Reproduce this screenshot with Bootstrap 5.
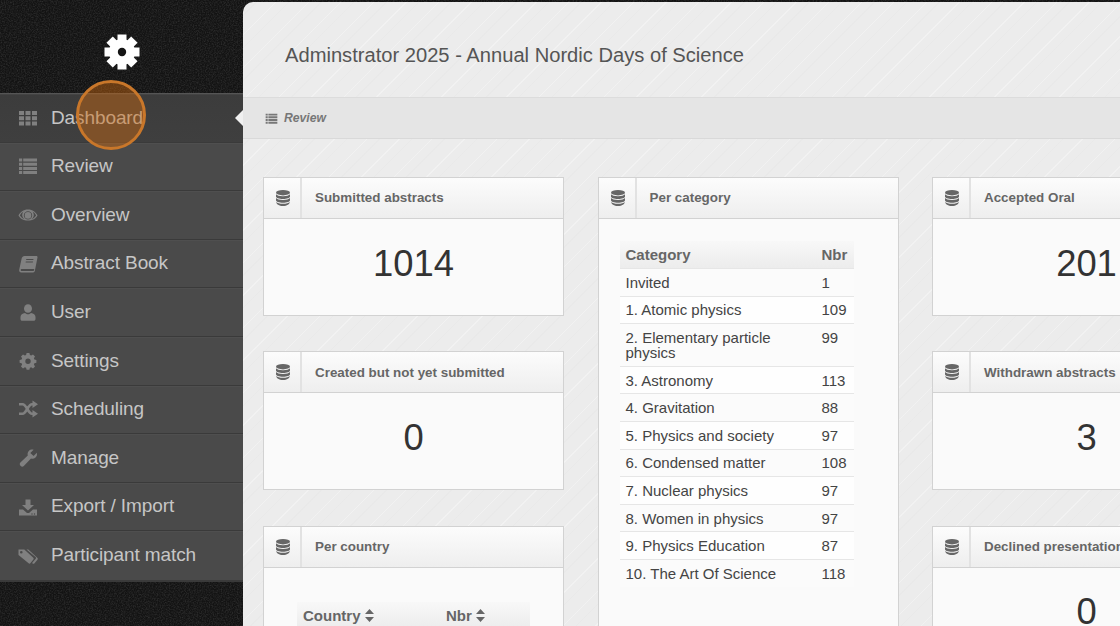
<!DOCTYPE html>
<html lang="en">
<head>
<meta charset="utf-8">
<title>Review</title>
<link href="https://cdn.jsdelivr.net/npm/bootstrap@5.3.0/dist/css/bootstrap.min.css" rel="stylesheet">
<style>
html,body{height:626px;overflow:hidden}
body{background-color:#131313;font-family:"Liberation Sans",Arial,sans-serif;color:#333;
 background-image:url("data:image/svg+xml,%3Csvg xmlns='http://www.w3.org/2000/svg' width='240' height='240'%3E%3Cfilter id='n'%3E%3CfeTurbulence type='fractalNoise' baseFrequency='.75' numOctaves='2' stitchTiles='stitch'/%3E%3CfeColorMatrix values='0 0 0 0 1 0 0 0 0 1 0 0 0 0 1 0 0 0 .22 -.08'/%3E%3C/filter%3E%3Crect width='240' height='240' filter='url(%23n)'/%3E%3C/svg%3E")}
.side-col{width:243px;flex:none;position:relative}
.side-logo{height:93px;padding-bottom:0}
.logo-mark{width:36px;height:36px;margin-top:11px;fill:#fff}
.side-menu{border-top:1px solid #555;border-bottom:2px solid #3a3a3a}
.side-link{height:48.6px;background:#4a4a4a;border-bottom:1px solid #3a3a3a;box-shadow:inset 0 1px 0 #4f4f4f;color:#c6c6c6;font-size:19px;letter-spacing:-.1px;text-decoration:none}
.side-link:last-child{border-bottom:0}
.side-link.is-active{background:linear-gradient(#3c3c3c,#3f3f3f);box-shadow:inset 0 1px 0 #444}
.side-ico{width:20px;height:20px;margin-left:18px;margin-right:13px;flex:none;fill:#808080}
.side-arrow{position:absolute;right:0;top:110px;width:0;height:0;border:8px solid transparent;border-right-color:#f0f0f0;border-left:0}
.hot-spot{position:absolute;left:76px;top:80px;width:70px;height:70px;border-radius:50%;background:rgba(205,105,15,.45);border:3px solid #c9772a;z-index:5}
.main-col{flex:none;width:877px;height:624px;margin-top:2px;overflow:hidden;border-top-left-radius:10px;background-color:#ececec;
 background-image:repeating-linear-gradient(135deg,rgba(255,255,255,.3) 0 1px,transparent 1px 9px,rgba(0,0,0,.012) 9px 10px,transparent 10px 23px)}
.main-head{height:96px;border-bottom:1px solid #dcdcdc;padding:12px 0 0 42px}
.main-title{font-size:20.15px;font-weight:400;color:#555;margin:0}
.crumb-bar{height:41px;background:#e5e5e5;border-bottom:1px solid #d9d9d9;padding-left:22px;color:#777;font-size:12.2px;font-weight:700;font-style:italic}
.crumb-ico{width:13px;height:13px;fill:#777;margin-right:6px}
.board{padding:38px 0 0 20px;gap:33.5px}
.board-col{width:301px;flex:none;gap:35.4px}
.board-col-last{width:309px}
.stat-card{border:1px solid #d2d2d2;border-radius:0;background:#fafafa;flex:none}
.stat-head{height:41px;padding:0;border-bottom:1px solid #d2d2d2;border-radius:0!important;background:linear-gradient(#fcfcfc,#eeeeee);color:#666;font-size:13.4px;font-weight:700}
.stat-tab{width:38px;height:40px;border-right:2px solid #e2e2e2;padding-left:2px;flex:none}
.stat-ico{width:14px;height:16px;fill:#666}
.stat-name{padding:1px 0 0 13px;white-space:nowrap}
.stat-num{height:96px;font-size:36.4px;color:#333;padding:0 0 6px}
.tbl-wrap{padding:22px 21px 60px}
.data-tbl{width:234px;table-layout:fixed;font-size:15px;line-height:15px;margin:0}
.data-tbl th{background:linear-gradient(#f8f8f8,#ececec);color:#666;font-weight:700;padding:6px;border-bottom:1px solid #e6e6e6}
.data-tbl td{padding:5.8px 6px;border-bottom:1px solid #e6e6e6;background:#fefefe;color:#444}
.data-tbl tr:nth-child(odd) td{background:#fbfbfb}
.data-tbl tr:last-child td{border-bottom:0}
.data-tbl .num-col{width:38px}
.tbl-wrap-wide{padding:34px 33px 10px}
.tbl-wide{width:233px}
.tbl-wide .num-col{width:90px}
.sort-ico{width:9px;height:13px;fill:#666;vertical-align:-1px}
</style>
</head>
<body class="d-flex">
<svg width="0" height="0" class="position-absolute">
 <defs>
  <symbol id="i-db" viewBox="0 0 14 16"><ellipse cx="7" cy="2.700" rx="7" ry="2.700"/><path d="M0 4.200c1 1.300 3.500 2 7 2s6-.7 7-2v2.300c0 1.400-3 2.500-7 2.500s-7-1.100-7-2.500z"/><path d="M0 8c1 1.300 3.500 2 7 2s6-.7 7-2v2.300c0 1.400-3 2.500-7 2.500s-7-1.100-7-2.500z"/><path d="M.3 12c1 1.200 3.400 1.800 6.700 1.800s5.700-.6 6.700-1.800c.2 2-2.800 4-6.700 4s-6.900-2-6.700-4z"/></symbol>
  <symbol id="i-list" viewBox="0 0 20 20"><path d="M1 2.500h3.200v3H1zM5.200 2.500H19v3H5.200zM1 6.700h3.200v3H1zM5.200 6.700H19v3H5.200zM1 10.900h3.200v3H1zM5.200 10.900H19v3H5.200zM1 15.100h3.200v3H1zM5.200 15.100H19v3H5.200z"/></symbol>
  <symbol id="i-gear" viewBox="0 0 20 20"><path fill-rule="evenodd" d="M8.600 2h2.800l.5 2 1.300.5 1.800-1.100 2 2-1.100 1.800.5 1.300 2 .5v2.800l-2 .5-.5 1.300 1.100 1.800-2 2-1.800-1.100-1.300.5-.5 2H8.600l-.5-2-1.300-.5L5 17.400l-2-2 1.100-1.800-.5-1.300-2-.5V9l2-.5.5-1.300L3 5.400l2-2 1.800 1.100 1.300-.5zM10 7.500a2.700 2.700 0 1 0 0 5.400 2.700 2.700 0 0 0 0-5.400z"/></symbol>
 </defs>
</svg>

<aside class="side-col">
 <div class="side-logo d-flex align-items-center justify-content-center">
  <svg class="logo-mark" viewBox="-18 -18 36 36"><circle r="13"/><rect x="-4.500" y="-17.500" width="9" height="35"/><rect x="-4.500" y="-17.500" width="9" height="35" transform="rotate(45)"/><rect x="-4.500" y="-17.500" width="9" height="35" transform="rotate(90)"/><rect x="-4.500" y="-17.500" width="9" height="35" transform="rotate(135)"/><circle r="4.200" fill="#151515"/></svg>
 </div>
 <nav class="side-menu d-flex flex-column">
  <a class="side-link is-active d-flex align-items-center" href="#"><svg class="side-ico" viewBox="0 0 20 20"><path d="M1 3h5v4H1zM7.500 3h5v4h-5zM14 3h5v4h-5zM1 8.200h5v4H1zM7.500 8.200h5v4h-5zM14 8.200h5v4h-5zM1 13.400h5v4H1zM7.500 13.400h5v4h-5zM14 13.400h5v4h-5z"/></svg>Dashboard</a>
  <a class="side-link d-flex align-items-center" href="#"><svg class="side-ico"><use href="#i-list"/></svg>Review</a>
  <a class="side-link d-flex align-items-center" href="#"><svg class="side-ico" viewBox="0 0 20 20"><path fill-rule="evenodd" d="M10 4.500c4.500 0 8 2.700 9.500 6-1.500 3-5 5-9.500 5s-8-2-9.500-5c1.500-3.300 5-6 9.500-6zM5.500 6.500c-1.500.8-2.800 2.200-3.600 4 1.300 2 3 3.200 5 3.800-1.700-1-2.700-2.500-2.700-4 0-1.500.4-2.800 1.300-3.800zm9 0c.9 1 1.300 2.300 1.300 3.800s-1 3-2.700 4c2-.6 3.700-1.800 5-3.800-.8-1.800-2.100-3.200-3.600-4zM10 6.200a4.200 4.200 0 1 0 0 8.400 4.200 4.200 0 0 0 0-8.400z"/><circle cx="10" cy="10.400" r="3.300"/></svg>Overview</a>
  <a class="side-link d-flex align-items-center" href="#"><svg class="side-ico" viewBox="0 0 20 20"><path fill-rule="evenodd" d="M6.500 2h11.800c.9 0 1.400.6 1.200 1.400l-2.700 13.700c-.2.900-.8 1.400-1.700 1.400H3.300C1.800 18.500.9 17.300 1.200 15.800L3.700 4.300C4 3 5.100 2 6.500 2zM8.300 5l-.2 1h7.200l.2-1zm-.5 2.600-.2 1h7.200l.2-1zM3.900 15c-.8 0-1.200.4-1.200 1s.4 1 1.100 1h11.500c.4 0 .6-.2.7-.5l.3-1.500z"/></svg>Abstract Book</a>
  <a class="side-link d-flex align-items-center" href="#"><svg class="side-ico" viewBox="0 0 20 20"><ellipse cx="10" cy="6.500" rx="4" ry="4.300"/><path d="M2.500 15c0-2.300 2-3.500 4.500-4 1 .9 2 1.200 3 1.200s2-.3 3-1.200c2.500.5 4.500 1.700 4.500 4v2c0 1-.8 1.800-1.800 1.800H4.300c-1 0-1.800-.8-1.800-1.800z"/></svg>User</a>
  <a class="side-link d-flex align-items-center" href="#"><svg class="side-ico"><use href="#i-gear"/></svg>Settings</a>
  <a class="side-link d-flex align-items-center" href="#"><svg class="side-ico" viewBox="0 0 20 20"><path d="M1 5.200h3.500c4 0 5.500 9.600 9.500 9.600h1M1 14.800h3.500c4 0 5.500-9.600 9.500-9.600h1" fill="none" stroke="#808080" stroke-width="2.600"/><path d="M14.500 1.500 20 5.200l-5.500 3.700zM14.500 11.100l5.500 3.700-5.500 3.700z"/></svg>Scheduling</a>
  <a class="side-link d-flex align-items-center" href="#"><svg class="side-ico" viewBox="0 0 20 20"><path d="M18.800 4.800c.5 1.800 0 3.600-1.300 4.800-1.300 1.200-3 1.500-4.500 1L5.800 18c-.8.800-2.200.9-3 .1l-.5-.5c-.8-.8-.7-2.200.1-3l7.400-7.200c-.5-1.500-.2-3.200 1-4.500C12 1.700 13.900 1.200 15.600 1.700l-3.300 3.300 3.300 3.100z"/></svg>Manage</a>
  <a class="side-link d-flex align-items-center" href="#"><svg class="side-ico" viewBox="0 0 20 20"><path d="M7.500 2.500h5v5.500H16l-6 5.500L4 8h3.500z"/><path fill-rule="evenodd" d="M1 12.500h4l4 3.500h2l4-3.500h4v6H1zm13 3.800a.7.700 0 1 0 0 1.400.7.700 0 0 0 0-1.400zm2.500 0a.7.700 0 1 0 0 1.400.7.700 0 0 0 0-1.400z"/></svg>Export / Import</a>
  <a class="side-link d-flex align-items-center" href="#"><svg class="side-ico" viewBox="0 0 20 20"><path fill-rule="evenodd" d="M.5 3.500h5.800l9 8.300c.5.500.5 1.200.1 1.700l-3.100 3.700c-.4.500-1.200.6-1.700.1L.5 8.900zM3.300 5a1.300 1.300 0 1 0 0 2.600 1.300 1.300 0 0 0 0-2.600z"/><path d="M8.500 3.500h1.800l9.200 8.500c.4.400.4 1 .1 1.400l-3.300 4c-.4.400-.9.500-1.400.3l-.8-.6 3.800-4.500c.3-.4.300-.9-.1-1.300z"/></svg>Participant match</a>
 </nav>
 <span class="side-arrow"></span>
 <span class="hot-spot"></span>
</aside>

<main class="main-col">
 <header class="main-head d-flex align-items-center"><h1 class="main-title">Adminstrator 2025 - Annual Nordic Days of Science</h1></header>
 <div class="crumb-bar d-flex align-items-center"><svg class="crumb-ico" viewBox="0 0 20 20"><use href="#i-list"/></svg>Review</div>
 <div class="board d-flex">
  <div class="board-col d-flex flex-column">
   <section class="card stat-card">
    <div class="card-header stat-head d-flex align-items-center"><span class="stat-tab d-flex align-items-center justify-content-center"><svg class="stat-ico"><use href="#i-db"/></svg></span><span class="stat-name">Submitted abstracts</span></div>
    <div class="stat-num d-flex align-items-center justify-content-center">1014</div>
   </section>
   <section class="card stat-card">
    <div class="card-header stat-head d-flex align-items-center"><span class="stat-tab d-flex align-items-center justify-content-center"><svg class="stat-ico"><use href="#i-db"/></svg></span><span class="stat-name">Created but not yet submitted</span></div>
    <div class="stat-num d-flex align-items-center justify-content-center">0</div>
   </section>
   <section class="card stat-card">
    <div class="card-header stat-head d-flex align-items-center"><span class="stat-tab d-flex align-items-center justify-content-center"><svg class="stat-ico"><use href="#i-db"/></svg></span><span class="stat-name">Per country</span></div>
    <div class="tbl-wrap-wide">
     <table class="table data-tbl tbl-wide"><thead><tr><th>Country <svg class="sort-ico" viewBox="0 0 9 13"><path d="M4.500 0 9 5H0zM0 8h9l-4.500 5z"/></svg></th><th class="num-col">Nbr <svg class="sort-ico" viewBox="0 0 9 13"><path d="M4.500 0 9 5H0zM0 8h9l-4.500 5z"/></svg></th></tr></thead></table>
    </div>
   </section>
  </div>
  <div class="board-col d-flex flex-column">
   <section class="card stat-card">
    <div class="card-header stat-head d-flex align-items-center"><span class="stat-tab d-flex align-items-center justify-content-center"><svg class="stat-ico"><use href="#i-db"/></svg></span><span class="stat-name">Per category</span></div>
    <div class="tbl-wrap">
     <table class="table data-tbl">
      <thead><tr><th>Category</th><th class="num-col">Nbr</th></tr></thead>
      <tbody>
       <tr><td>Invited</td><td>1</td></tr>
       <tr><td>1. Atomic physics</td><td>109</td></tr>
       <tr><td>2. Elementary particle physics</td><td>99</td></tr>
       <tr><td>3. Astronomy</td><td>113</td></tr>
       <tr><td>4. Gravitation</td><td>88</td></tr>
       <tr><td>5. Physics and society</td><td>97</td></tr>
       <tr><td>6. Condensed matter</td><td>108</td></tr>
       <tr><td>7. Nuclear physics</td><td>97</td></tr>
       <tr><td>8. Women in physics</td><td>97</td></tr>
       <tr><td>9. Physics Education</td><td>87</td></tr>
       <tr><td>10. The Art Of Science</td><td>118</td></tr>
      </tbody>
     </table>
    </div>
   </section>
  </div>
  <div class="board-col board-col-last d-flex flex-column">
   <section class="card stat-card">
    <div class="card-header stat-head d-flex align-items-center"><span class="stat-tab d-flex align-items-center justify-content-center"><svg class="stat-ico"><use href="#i-db"/></svg></span><span class="stat-name">Accepted Oral</span></div>
    <div class="stat-num d-flex align-items-center justify-content-center">201</div>
   </section>
   <section class="card stat-card">
    <div class="card-header stat-head d-flex align-items-center"><span class="stat-tab d-flex align-items-center justify-content-center"><svg class="stat-ico"><use href="#i-db"/></svg></span><span class="stat-name">Withdrawn abstracts</span></div>
    <div class="stat-num d-flex align-items-center justify-content-center">3</div>
   </section>
   <section class="card stat-card">
    <div class="card-header stat-head d-flex align-items-center"><span class="stat-tab d-flex align-items-center justify-content-center"><svg class="stat-ico"><use href="#i-db"/></svg></span><span class="stat-name">Declined presentation</span></div>
    <div class="stat-num d-flex align-items-center justify-content-center">0</div>
   </section>
  </div>
 </div>
</main>
<script src="https://cdn.jsdelivr.net/npm/bootstrap@5.3.0/dist/js/bootstrap.bundle.min.js"></script>
</body>
</html>
